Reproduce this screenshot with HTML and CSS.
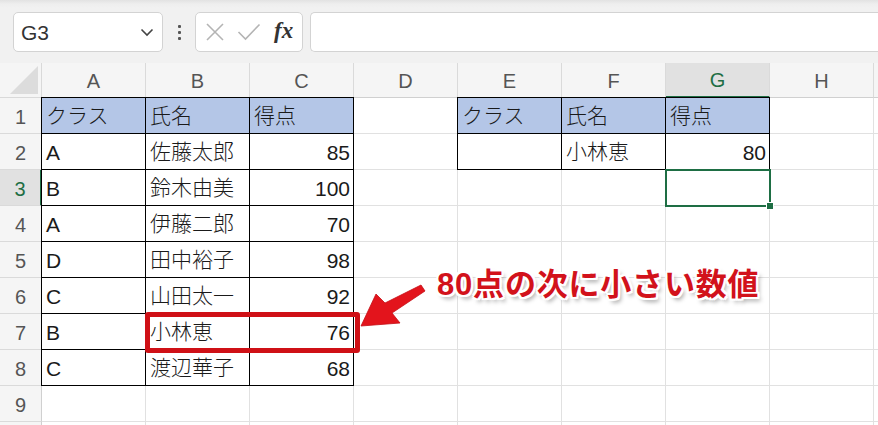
FILE: index.html
```html
<!DOCTYPE html>
<html lang="ja">
<head>
<meta charset="utf-8">
<link rel="stylesheet" href="styles.css">
</head>
<body>
<div class="page">
  <div class="toolbar">
    <div class="namebox"><span class="ref">G3</span>
      <svg class="chev" width="14" height="9" viewBox="0 0 14 9"><path d="M1.5 1.5 L7 7 L12.5 1.5" fill="none" stroke="#444" stroke-width="1.6"/></svg>
    </div>
    <div class="dots"><i></i><i></i><i></i></div>
    <div class="fxbox">
      <svg width="20" height="20" viewBox="0 0 20 20"><path d="M2 2 L18 18 M18 2 L2 18" stroke="#b4b4b4" stroke-width="1.6" fill="none"/></svg>
      <svg width="24" height="20" viewBox="0 0 24 20"><path d="M1.5 10 L8.5 17 L22.5 2.5" stroke="#b4b4b4" stroke-width="1.6" fill="none"/></svg>
      <span class="fx">fx</span>
    </div>
    <div class="formula"></div>
  </div>

  <div class="sheet">
    <div class="corner"><span class="tri"></span></div>
    <div class="ch">A</div><div class="ch">B</div><div class="ch">C</div><div class="ch">D</div><div class="ch">E</div><div class="ch">F</div><div class="ch sel">G</div><div class="ch">H</div><div class="ch"></div>

    <div class="rh">1</div>
    <div class="c b hd bl bt">クラス</div><div class="c b hd bt">氏名</div><div class="c b hd bt">得点</div>
    <div class="c"></div>
    <div class="c b hd bl bt">クラス</div><div class="c b hd bt">氏名</div><div class="c b hd bt">得点</div>
    <div class="c"></div><div class="c"></div>

    <div class="rh">2</div>
    <div class="c b bl">A</div><div class="c b">佐藤太郎</div><div class="c b num">85</div>
    <div class="c"></div>
    <div class="c b bl"></div><div class="c b">小林恵</div><div class="c b num">80</div>
    <div class="c"></div><div class="c"></div>

    <div class="rh selr">3</div>
    <div class="c b bl">B</div><div class="c b">鈴木由美</div><div class="c b num">100</div>
    <div class="c"></div><div class="c"></div><div class="c"></div>
    <div class="c active"><span class="handle"></span></div>
    <div class="c"></div><div class="c"></div>

    <div class="rh">4</div>
    <div class="c b bl">A</div><div class="c b">伊藤二郎</div><div class="c b num">70</div>
    <div class="c"></div><div class="c"></div><div class="c"></div><div class="c"></div><div class="c"></div><div class="c"></div>

    <div class="rh">5</div>
    <div class="c b bl">D</div><div class="c b">田中裕子</div><div class="c b num">98</div>
    <div class="c"></div><div class="c"></div><div class="c"></div><div class="c"></div><div class="c"></div><div class="c"></div>

    <div class="rh">6</div>
    <div class="c b bl">C</div><div class="c b">山田太一</div><div class="c b num">92</div>
    <div class="c"></div><div class="c"></div><div class="c"></div><div class="c"></div><div class="c"></div><div class="c"></div>

    <div class="rh">7</div>
    <div class="c b bl">B</div><div class="c b">小林恵</div><div class="c b num">76</div>
    <div class="c"></div><div class="c"></div><div class="c"></div><div class="c"></div><div class="c"></div><div class="c"></div>

    <div class="rh">8</div>
    <div class="c b bl">C</div><div class="c b">渡辺華子</div><div class="c b num">68</div>
    <div class="c"></div><div class="c"></div><div class="c"></div><div class="c"></div><div class="c"></div><div class="c"></div>

    <div class="rh">9</div>
    <div class="c"></div><div class="c"></div><div class="c"></div><div class="c"></div><div class="c"></div><div class="c"></div><div class="c"></div><div class="c"></div><div class="c"></div>

    <div class="rh"></div>
    <div class="c"></div><div class="c"></div><div class="c"></div><div class="c"></div><div class="c"></div><div class="c"></div><div class="c"></div><div class="c"></div><div class="c"></div>
  </div>

  <div class="redbox"></div>
  <svg class="arrow" width="70" height="46" viewBox="358 284 70 46">
    <polygon points="361,326 376,294 385,303 421,285 425,291 392,313 400,323" fill="#e3141c" stroke="#c40d14" stroke-width="0.8" stroke-linejoin="round"/>
  </svg>
  <div class="note">80点の次に小さい数値</div>
</div>
</body>
</html>
```
FILE: styles.css
```css
html, body {
  margin: 0;
  padding: 0;
  background: #ffffff;
  overflow: hidden;
}
.page {
  position: relative;
  width: 878px;
  height: 425px;
  overflow: hidden;
  font-family: "Liberation Sans", "Noto Sans CJK JP", sans-serif;
}
.toolbar {
  height: 63px;
  box-sizing: border-box;
  background: linear-gradient(#e2e2e2 0, #eeeeee 4px, #f1f1f1 8px);
  display: flex;
  align-items: flex-start;
  padding: 12px 0 0 13px;
}
.namebox {
  width: 150px;
  height: 40px;
  box-sizing: border-box;
  background: #fff;
  border: 1px solid #d3d3d3;
  border-radius: 5px;
  display: flex;
  align-items: center;
  justify-content: space-between;
  padding: 0 8px 0 7px;
}
.ref {
  font-size: 21px;
  color: #333;
  padding-top: 2px;
}
.chev { margin-top: 1px; }
.dots {
  width: 32px;
  height: 40px;
  display: flex;
  flex-direction: column;
  align-items: center;
  justify-content: center;
  gap: 3px;
}
.dots i {
  display: block;
  width: 3px;
  height: 3px;
  background: #555;
  border-radius: 1px;
}
.fxbox {
  width: 108px;
  height: 40px;
  box-sizing: border-box;
  background: #fff;
  border: 1px solid #d3d3d3;
  border-radius: 5px;
  display: flex;
  align-items: center;
  padding: 0 6px 0 9px;
  gap: 12px;
}
.fx {
  font-family: "Liberation Serif", "DejaVu Serif", serif;
  font-style: italic;
  font-weight: bold;
  font-size: 23px;
  color: #333;
  margin-left: 1px;
  margin-top: -2px;
}
.formula {
  flex: 1;
  margin-left: 7px;
  height: 40px;
  box-sizing: border-box;
  background: #fff;
  border: 1px solid #d3d3d3;
  border-right: none;
  border-radius: 5px 0 0 5px;
}
.sheet {
  display: grid;
  grid-template-columns: 42px repeat(9, 104px);
  grid-template-rows: 35px repeat(10, 36px);
}
.sheet > div {
  box-sizing: border-box;
  border-right: 1px solid #e1e1e1;
  border-bottom: 1px solid #e1e1e1;
  position: relative;
}
.corner {
  background: #f5f5f5;
  border-color: #d9d9d9 !important;
}
.tri {
  position: absolute;
  right: 3px;
  bottom: 3px;
  width: 0;
  height: 0;
  border-left: 28px solid transparent;
  border-bottom: 28px solid #dcdcdc;
}
.ch {
  background: #f5f5f5;
  border-right-color: #dadada !important;
  border-bottom-color: #d0d0d0 !important;
  color: #555;
  font-size: 20px;
  display: flex;
  align-items: center;
  justify-content: center;
  padding-top: 2px;
}
.ch.sel {
  background: #e1e1e1;
  color: #1e6e44;
  border-bottom: 2px solid #1e6e44 !important;
}
.rh {
  background: #f5f5f5;
  border-right-color: #d0d0d0 !important;
  border-bottom-color: #dadada !important;
  color: #555;
  font-size: 20px;
  display: flex;
  align-items: center;
  justify-content: center;
  padding-top: 3px;
}
.rh.selr {
  background: #e1e1e1;
  color: #1e6e44;
  border-right: 2px solid #1e6e44 !important;
}
.c {
  font-size: 21px;
  font-weight: 300;
  color: #1a1a1a;
  display: flex;
  align-items: flex-end;
  padding: 0 3px 4px 4px;
  white-space: nowrap;
}
.c.hd { background: #b4c6e7; }
.c.b {
  border-right-color: #000;
  border-bottom-color: #000;
}
.c.num { justify-content: flex-end; }
.c.bl { box-shadow: -1px 0 0 #000; }
.c.bt { box-shadow: 0 -1px 0 #000; }
.c.bl.bt { box-shadow: -1px 0 0 #000, 0 -1px 0 #000, -1px -1px 0 #000; }
.c.active {
  outline: 2px solid #1e6e44;
  outline-offset: -1px;
  overflow: visible;
  z-index: 2;
}
.handle {
  position: absolute;
  right: -5px;
  bottom: -5px;
  width: 6px;
  height: 6px;
  background: #1e6e44;
  border: 1px solid #fff;
}
.redbox {
  position: absolute;
  left: 145px;
  top: 312px;
  width: 215px;
  height: 41px;
  box-sizing: border-box;
  border: 5px solid #cf1016;
  border-radius: 3px;
}
.arrow {
  position: absolute;
  left: 358px;
  top: 284px;
}
.note {
  position: absolute;
  left: 437px;
  top: 267px;
  font-family: "Liberation Sans", "Noto Sans CJK JP", sans-serif;
  font-weight: bold;
  font-size: 31px;
  line-height: 36px;
  letter-spacing: 0.8px;
  color: #d2121b;
  white-space: nowrap;
  text-shadow:
    2px 0 0 #fff, -2px 0 0 #fff, 0 2px 0 #fff, 0 -2px 0 #fff,
    2px 2px 0 #fff, -2px -2px 0 #fff, 2px -2px 0 #fff, -2px 2px 0 #fff,
    3px 4px 4px rgba(0,0,0,0.35);
}
```
